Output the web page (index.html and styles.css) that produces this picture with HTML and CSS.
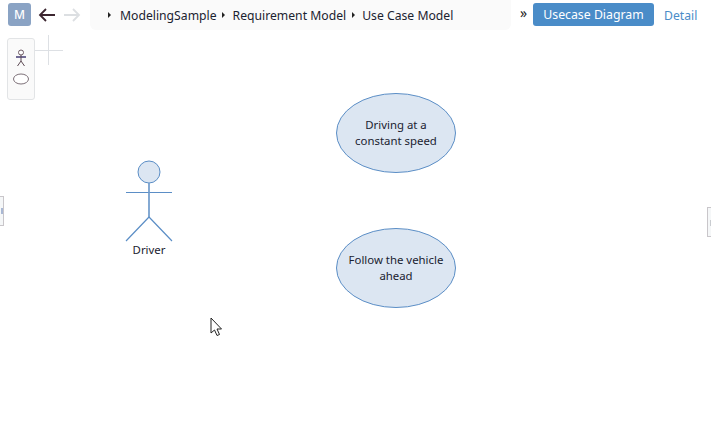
FILE: index.html
```html
<!DOCTYPE html>
<html lang="en">
<head>
<meta charset="utf-8">
<title>Usecase Diagram</title>
<link rel="stylesheet" href="styles.css">
</head>
<body>
<div class="app">
  <header class="topbar">
    <div class="logo">M</div>
    <svg class="nav" width="20" height="16" viewBox="0 0 20 16"><path d="M17 8H2M8 2 2 8l6 6" fill="none" stroke="#3c2630" stroke-width="1.8"/></svg>
    <svg class="nav nav-next" width="20" height="16" viewBox="0 0 20 16"><path d="M1 8h15M10 2l6 6-6 6" fill="none" stroke="#dcdfe2" stroke-width="1.8"/></svg>
    <nav class="crumbs">
      <span class="crumb">ModelingSample</span>
      <span class="crumb">Requirement Model</span>
      <span class="crumb">Use Case Model</span>
    </nav>
    <span class="more">»</span>
    <button class="primary">Usecase Diagram</button>
    <a class="detail">Detail</a>
  </header>
  <main class="canvas">
    <div class="palette">
      <svg width="14" height="18" viewBox="0 0 14 18"><circle cx="7" cy="3.500" r="2.500" fill="#fff" stroke="#6d5a64"/><path d="M2 8h10" stroke="#2a2060" stroke-width="1.300"/><path d="M7 6v6M7 12l-3.500 5M7 12l3.500 5" stroke="#5d4a54" fill="none"/></svg>
      <svg width="18" height="12" viewBox="0 0 18 12"><ellipse cx="9" cy="6" rx="7.500" ry="5" fill="#fff" stroke="#7d7078"/></svg>
    </div>
    <div class="cross-h"></div>
    <div class="cross-v"></div>
    <svg class="diagram" width="711" height="425" viewBox="0 0 711 425">
      <g class="shape">
        <circle cx="149" cy="172" r="11"/>
        <path d="M126 192.500h46"/>
        <path class="stem" d="M149 183v34"/>
        <path class="leg" d="M149 217l-23 24M149 217l23 24"/>
        <ellipse cx="396" cy="133" rx="59.500" ry="39.500"/>
        <ellipse cx="396" cy="268" rx="59.500" ry="39.500"/>
      </g>
      <g class="label">
        <text x="149" y="254">Driver</text>
        <text x="396" y="129">Driving at a</text>
        <text x="396" y="145">constant speed</text>
        <text x="396" y="264">Follow the vehicle</text>
        <text x="396" y="280">ahead</text>
      </g>
      <path class="cursor" d="M211 318v15l3.500-3 2.500 5.500 2.500-1-2.500-5.500h4.500z"/>
    </svg>
    <div class="tab tab-left"><span class="grip grip-left"></span></div>
    <div class="tab tab-right"><span class="grip grip-right"></span></div>
  </main>
</div>
</body>
</html>
```
FILE: styles.css
```css
* { box-sizing: border-box; }
html, body { margin: 0; height: 100%; background: #fff; overflow: hidden; }
body { font-family: "Noto Sans", "Open Sans", sans-serif; font-size: 12.2px; color: #1a2230; }
.app { position: relative; width: 711px; height: 425px; }
.topbar { display: flex; align-items: center; height: 30px; padding: 0 0 0 8px; position: relative; z-index: 2; }
.logo { width: 23px; height: 23px; margin-top: -1px; background: #8aa3c4; color: #fff; border-radius: 3px; display: flex; align-items: center; justify-content: center; font-weight: 500; font-size: 12px; }
.nav { flex: none; margin-left: 7px; }
.nav-next { margin-left: 5px; }
.crumbs { display: flex; align-items: center; width: 421px; height: 30px; margin-left: 7px; padding: 0 0 0 18px; background: #fafafa; border-radius: 0 0 6px 6px; }
.crumb { display: flex; align-items: center; }
.crumb::before { content: ""; width: 0; height: 0; border-left: 3px solid #222; border-top: 3px solid transparent; border-bottom: 3px solid transparent; margin-right: 9px; }
.crumb + .crumb { margin-left: 5px; }
.crumb + .crumb::before { margin-right: 8px; }
.crumb:last-child { margin-left: 6px; }
.crumb:last-child::before { margin-right: 7px; }
.more { margin-left: 9px; width: 13px; margin-top: -4px; font-size: 14px; line-height: 1; color: #222; }
.primary { width: 121px; height: 23px; margin-top: -1px; border: 0; border-radius: 3px; background: #4a8cc8; color: #fff; font: inherit; font-size: 12.300px; padding: 0; }
.detail { margin-left: 10px; color: #4a8cc8; }
.canvas { position: absolute; inset: 0; }
.palette { position: absolute; left: 7px; top: 38px; width: 28px; height: 62px; background: #fafafa; border: 1px solid #e2e4e6; border-radius: 3px; display: flex; flex-direction: column; align-items: center; padding-top: 10px; gap: 6px; }
.cross-h { position: absolute; left: 35px; top: 50px; width: 28px; height: 1px; background: #dde0e4; }
.cross-v { position: absolute; left: 48px; top: 35px; width: 1px; height: 30px; background: #dde0e4; }
.diagram { position: absolute; left: 0; top: 0; }
.shape { fill: #dce6f2; stroke: #5b8ec6; stroke-width: 1; }
.shape path { fill: none; }
.shape .stem { stroke-width: 1.700; stroke: #6f9bcc; }
.shape .leg { stroke-width: 1.200; }
.label text { font-size: 11.400px; text-anchor: middle; fill: #1a2230; }
.cursor { fill: #fff; stroke: #222; stroke-width: 1; }
.tab { position: absolute; background: #f5f7f8; border: 1px solid #c9c6ca; }
.tab-left { left: -10px; top: 196px; width: 14px; height: 30px; }
.tab-right { left: 707px; top: 207px; width: 14px; height: 30px; }
.grip { position: absolute; width: 2px; height: 6px; }
.grip-left { left: 10px; top: 11px; background: #a9b8d4; }
.grip-right { left: 2px; top: 12px; background: #c9ccd0; }
```
